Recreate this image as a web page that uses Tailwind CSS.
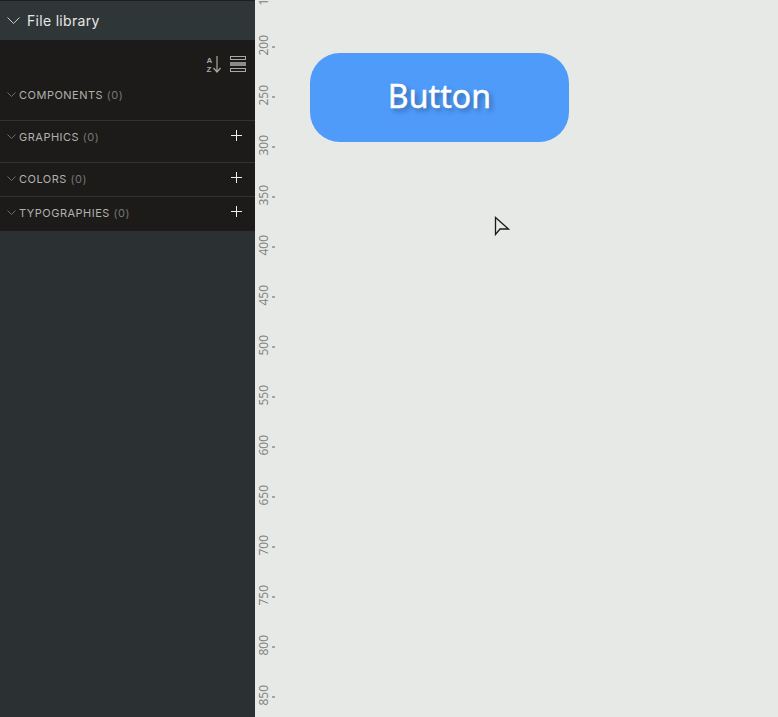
<!DOCTYPE html>
<html lang="en">
<head>
    <meta charset="UTF-8">
    <title>File library</title>
    <script src="https://cdn.jsdelivr.net/npm/@tailwindcss/browser@4"></script>
</head>
<body class="w-[778px] h-[717px] overflow-hidden flex bg-[#e7e9e6] font-['Inter','Noto_Sans',sans-serif]">
    <!-- Sidebar -->
    <aside class="w-[255px] h-full shrink-0 flex flex-col bg-[#2b3132]">
        <div class="h-10 shrink-0 flex items-center pl-[7px] gap-[7px] bg-[#2e3637] border-t border-[#1e1e1c] text-[14px] tracking-[0.3px] text-[#e6e6e6]">
            <svg width="13" height="8" viewBox="0 0 13 8" fill="none" stroke="#c8cccc"><path d="M0.5 0.5 L6.5 6.5 L12.5 0.5"/></svg>
            <span>File library</span>
        </div>
        <div class="bg-[#1c1b19] flex flex-col text-[11px] tracking-[0.5px] text-[#b1b1ae]">
            <div class="h-[42px] flex items-center justify-end gap-[9px] pr-[9px] pt-[6px]">
                <svg width="15" height="18" viewBox="0 0 15 18" fill="none" stroke="#a8a8a6">
                    <text x="0.5" y="8" font-size="8" font-weight="700" fill="#a8a8a6" stroke="none" font-family="Liberation Sans">A</text>
                    <text x="0.5" y="17" font-size="8" font-weight="700" fill="#a8a8a6" stroke="none" font-family="Liberation Sans">Z</text>
                    <path d="M11 1 V16.5 M7.5 13 L11 17 L14.5 13" stroke-width="1.2"/>
                </svg>
                <div class="w-4 h-4 flex flex-col justify-between">
                    <div class="h-[4px] border border-[#a8a8a6]"></div>
                    <div class="h-[4px] bg-[#8a8a88]"></div>
                    <div class="h-[4px] border border-[#a8a8a6]"></div>
                </div>
            </div>
            <div class="h-[39px] flex pl-[7px] pt-[6px] gap-[3px] border-b border-[#2f3332]">
                <svg class="mt-[4px]" width="9" height="6" viewBox="0 0 9 6" fill="none" stroke="#6c6c6a"><path d="M0.5 0.5 L4.5 4.5 L8.5 0.5"/></svg>
                <span class="leading-[14px]">COMPONENTS <span class="text-[#777775]">(0)</span></span>
            </div>
            <div class="h-[42px] flex pl-[7px] pt-[9px] gap-[3px] border-b border-[#2f3332]">
                <svg class="mt-[4px]" width="9" height="6" viewBox="0 0 9 6" fill="none" stroke="#6c6c6a"><path d="M0.5 0.5 L4.5 4.5 L8.5 0.5"/></svg>
                <span class="leading-[14px]">GRAPHICS <span class="text-[#777775]">(0)</span></span>
                <svg class="ml-auto mr-[13px]" width="11" height="11" viewBox="0 0 11 11" stroke="#eeeeee"><path d="M5.5 0 V11 M0 5.5 H11"/></svg>
            </div>
            <div class="h-[34px] flex pl-[7px] pt-[9px] gap-[3px] border-b border-[#2f3332]">
                <svg class="mt-[4px]" width="9" height="6" viewBox="0 0 9 6" fill="none" stroke="#6c6c6a"><path d="M0.5 0.5 L4.5 4.5 L8.5 0.5"/></svg>
                <span class="leading-[14px]">COLORS <span class="text-[#777775]">(0)</span></span>
                <svg class="ml-auto mr-[13px]" width="11" height="11" viewBox="0 0 11 11" stroke="#eeeeee"><path d="M5.5 0 V11 M0 5.5 H11"/></svg>
            </div>
            <div class="h-[34px] flex pl-[7px] pt-[9px] gap-[3px]">
                <svg class="mt-[4px]" width="9" height="6" viewBox="0 0 9 6" fill="none" stroke="#6c6c6a"><path d="M0.5 0.5 L4.5 4.5 L8.5 0.5"/></svg>
                <span class="leading-[14px]">TYPOGRAPHIES <span class="text-[#777775]">(0)</span></span>
                <svg class="ml-auto mr-[13px]" width="11" height="11" viewBox="0 0 11 11" stroke="#eeeeee"><path d="M5.5 0 V11 M0 5.5 H11"/></svg>
            </div>
        </div>
    </aside>

    <!-- Ruler -->
    <div class="w-[20px] shrink-0 -mt-[28px] flex flex-col text-[12px] text-[#7c7e7d] font-['Open_Sans',sans-serif]">
        <div class="h-[50px] shrink-0 flex items-center"><span class="w-[17px] text-center whitespace-nowrap -rotate-90">150</span><span class="w-[3px] h-[2px] bg-[#a5a6a5]"></span></div>
        <div class="h-[50px] shrink-0 flex items-center"><span class="w-[17px] text-center whitespace-nowrap -rotate-90">200</span><span class="w-[3px] h-[2px] bg-[#a5a6a5]"></span></div>
        <div class="h-[50px] shrink-0 flex items-center"><span class="w-[17px] text-center whitespace-nowrap -rotate-90">250</span><span class="w-[3px] h-[2px] bg-[#a5a6a5]"></span></div>
        <div class="h-[50px] shrink-0 flex items-center"><span class="w-[17px] text-center whitespace-nowrap -rotate-90">300</span><span class="w-[3px] h-[2px] bg-[#a5a6a5]"></span></div>
        <div class="h-[50px] shrink-0 flex items-center"><span class="w-[17px] text-center whitespace-nowrap -rotate-90">350</span><span class="w-[3px] h-[2px] bg-[#a5a6a5]"></span></div>
        <div class="h-[50px] shrink-0 flex items-center"><span class="w-[17px] text-center whitespace-nowrap -rotate-90">400</span><span class="w-[3px] h-[2px] bg-[#a5a6a5]"></span></div>
        <div class="h-[50px] shrink-0 flex items-center"><span class="w-[17px] text-center whitespace-nowrap -rotate-90">450</span><span class="w-[3px] h-[2px] bg-[#a5a6a5]"></span></div>
        <div class="h-[50px] shrink-0 flex items-center"><span class="w-[17px] text-center whitespace-nowrap -rotate-90">500</span><span class="w-[3px] h-[2px] bg-[#a5a6a5]"></span></div>
        <div class="h-[50px] shrink-0 flex items-center"><span class="w-[17px] text-center whitespace-nowrap -rotate-90">550</span><span class="w-[3px] h-[2px] bg-[#a5a6a5]"></span></div>
        <div class="h-[50px] shrink-0 flex items-center"><span class="w-[17px] text-center whitespace-nowrap -rotate-90">600</span><span class="w-[3px] h-[2px] bg-[#a5a6a5]"></span></div>
        <div class="h-[50px] shrink-0 flex items-center"><span class="w-[17px] text-center whitespace-nowrap -rotate-90">650</span><span class="w-[3px] h-[2px] bg-[#a5a6a5]"></span></div>
        <div class="h-[50px] shrink-0 flex items-center"><span class="w-[17px] text-center whitespace-nowrap -rotate-90">700</span><span class="w-[3px] h-[2px] bg-[#a5a6a5]"></span></div>
        <div class="h-[50px] shrink-0 flex items-center"><span class="w-[17px] text-center whitespace-nowrap -rotate-90">750</span><span class="w-[3px] h-[2px] bg-[#a5a6a5]"></span></div>
        <div class="h-[50px] shrink-0 flex items-center"><span class="w-[17px] text-center whitespace-nowrap -rotate-90">800</span><span class="w-[3px] h-[2px] bg-[#a5a6a5]"></span></div>
        <div class="h-[50px] shrink-0 flex items-center"><span class="w-[17px] text-center whitespace-nowrap -rotate-90">850</span><span class="w-[3px] h-[2px] bg-[#a5a6a5]"></span></div>
    </div>

    <!-- Canvas -->
    <main class="relative flex-1 h-full">
        <div class="absolute left-[35px] top-[53px] w-[259px] h-[89px] rounded-[30px] bg-[#4f9bfa] flex items-center justify-center pb-[3px] text-[32px] text-white font-normal tracking-[0.1px] font-['Noto_Sans',sans-serif] [-webkit-text-stroke:0.5px_white] [text-shadow:3px_3px_5px_rgba(0,0,0,0.35)]">Button</div>
        <svg class="absolute left-[219px] top-[216px]" width="17" height="21" viewBox="0 0 17 21" fill="#e7e9e6" stroke="#1a1a1a" stroke-width="1.3"><path d="M1.5 1.5 V18.5 L6 13 L14.5 13 Z"/></svg>
    </main>
</body>
</html>
